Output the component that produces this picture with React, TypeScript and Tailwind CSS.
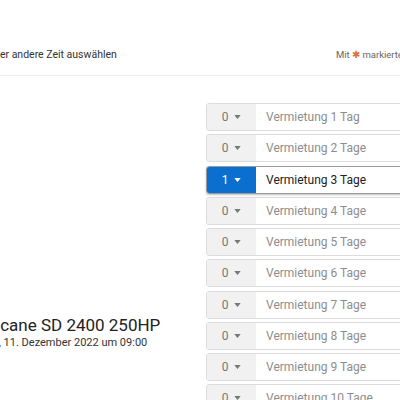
import React from "react";

const rows = [
  { count: 0, label: "Vermietung 1 Tag" },
  { count: 0, label: "Vermietung 2 Tage" },
  { count: 1, label: "Vermietung 3 Tage" },
  { count: 0, label: "Vermietung 4 Tage" },
  { count: 0, label: "Vermietung 5 Tage" },
  { count: 0, label: "Vermietung 6 Tage" },
  { count: 0, label: "Vermietung 7 Tage" },
  { count: 0, label: "Vermietung 8 Tage" },
  { count: 0, label: "Vermietung 9 Tage" },
  { count: 0, label: "Vermietung 10 Tage" },
];

function Caret({ className }: { className?: string }) {
  return (
    <svg viewBox="0 0 8 5" className={className} width="7" height="4">
      <path d="M0 0h8L4 5z" fill="currentColor" />
    </svg>
  );
}

function QtyRow({ count, label }: { count: number; label: string }) {
  const active = count > 0;
  return (
    <div
      className={
        active
          ? "flex h-[28px] w-[260px] overflow-hidden rounded-[3px] border border-[#9a9a9a] shadow-[0_1px_2px_rgba(0,0,0,0.25)]"
          : "flex h-[28px] w-[260px] overflow-hidden rounded-[3px] border border-[#dcdcdc]"
      }
    >
      <div
        className={
          active
            ? "flex w-[49px] items-center justify-center gap-[6px] bg-[#0b6fd0] text-[12px] text-white"
            : "flex w-[49px] items-center justify-center gap-[6px] bg-[#f1f1f1] text-[12px] text-[#777]"
        }
      >
        <span>{count}</span>
        <Caret />
      </div>
      <div
        className={
          active
            ? "flex flex-1 items-center bg-white pl-[10px] text-[12px] text-[#222]"
            : "flex flex-1 items-center bg-white pl-[10px] text-[12px] text-[#8d8d8d]"
        }
      >
        {label}
      </div>
    </div>
  );
}

export default function App() {
  return (
    <div
      className="h-[400px] w-[400px] overflow-hidden bg-white"
      style={{ fontFamily: "Roboto, 'Liberation Sans', sans-serif" }}
    >
      <div className="flex h-[76px] items-start whitespace-nowrap border-b border-[#ececec] pt-[47px]">
        <span className="-ml-[12px] w-[348px] shrink-0 text-[10.5px] leading-[16px] text-[#333]">
          oder andere Zeit auswählen
        </span>
        <span className="shrink-0 text-[9.5px] leading-[16px] text-[#666]">
          Mit <span className="text-[#e0703a]">✱</span> markierte Felder sind Pflichtfelder
        </span>
      </div>
      <div className="flex">
        <div className="w-[206px] shrink-0 pt-[239px]">
          <div className="-ml-[37px] whitespace-nowrap">
            <div className="text-[17px] leading-[20px] text-[#222]">Hurricane SD 2400 250HP</div>
            <div className="-ml-[5px] text-[11px] leading-[15px] text-[#333]">Sonntag, 11. Dezember 2022 um 09:00</div>
          </div>
        </div>
        <div className="flex flex-col gap-[3.25px] pt-[27px]">
          {rows.map((r) => (
            <QtyRow key={r.label} count={r.count} label={r.label} />
          ))}
        </div>
      </div>
    </div>
  );
}
